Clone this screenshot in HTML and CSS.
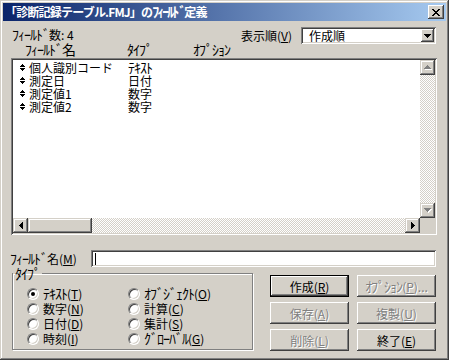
FILE: index.html
```html
<!DOCTYPE html>
<html lang="ja">
<head>
<meta charset="utf-8">
<link rel="stylesheet" href="styles.css">
</head>
<body>
<div class="win">
  <div class="titlebar">
    <span class="title">「診断記録テーブル.FMJ」の<span class="hk">ﾌｨｰﾙﾄﾞ</span>定義</span>
    <div class="close"><svg width="8" height="7" viewBox="0 0 8 7" shape-rendering="crispEdges"><path fill="#000" d="M0 0h2v1h-2zM6 0h2v1h-2zM1 1h2v1h-2zM5 1h2v1h-2zM2 2h4v1h-4zM3 3h2v1h-2zM2 4h4v1h-4zM1 5h2v1h-2zM5 5h2v1h-2zM0 6h2v1h-2zM6 6h2v1h-2z"/></svg></div>
  </div>
  <div class="body">
    <div class="toprow">
      <div class="topleft">
        <div class="count"><span class="hk">ﾌｨｰﾙﾄﾞ</span>数: 4</div>
        <div class="headers"><span class="hk">ﾌｨｰﾙﾄﾞ名</span><span class="hk">ﾀｲﾌﾟ</span><span class="hk">ｵﾌﾟｼｮﾝ</span></div>
      </div>
      <div class="sort">
        <span class="sort-label">表示順(<u>V</u>)</span>
        <div class="combo">
          <span class="combo-text">作成順</span>
          <div class="combo-btn"><svg width="7" height="4" viewBox="0 0 7 4" shape-rendering="crispEdges"><path fill="#000" d="M0 0h7v1h-1v1h-1v1h-1v1h-1v-1h-1v-1h-1v-1h-1z"/></svg></div>
        </div>
      </div>
    </div>
    <div class="listbox">
      <div class="items">
        <div class="item"><svg class="mv" width="5" height="7" viewBox="0 0 5 7" shape-rendering="crispEdges"><path fill="#000" d="M2 0h1v1h1v1h1v1h-5v-1h1v-1h1zM0 4h5v1h-1v1h-1v1h-1v-1h-1v-1h-1z"/></svg><span class="nm">個人識別コード</span><span class="hk">ﾃｷｽﾄ</span></div>
        <div class="item"><svg class="mv" width="5" height="7" viewBox="0 0 5 7" shape-rendering="crispEdges"><path fill="#000" d="M2 0h1v1h1v1h1v1h-5v-1h1v-1h1zM0 4h5v1h-1v1h-1v1h-1v-1h-1v-1h-1z"/></svg><span class="nm">測定日</span><span>日付</span></div>
        <div class="item"><svg class="mv" width="5" height="7" viewBox="0 0 5 7" shape-rendering="crispEdges"><path fill="#000" d="M2 0h1v1h1v1h1v1h-5v-1h1v-1h1zM0 4h5v1h-1v1h-1v1h-1v-1h-1v-1h-1z"/></svg><span class="nm">測定値1</span><span>数字</span></div>
        <div class="item"><svg class="mv" width="5" height="7" viewBox="0 0 5 7" shape-rendering="crispEdges"><path fill="#000" d="M2 0h1v1h1v1h1v1h-5v-1h1v-1h1zM0 4h5v1h-1v1h-1v1h-1v-1h-1v-1h-1z"/></svg><span class="nm">測定値2</span><span>数字</span></div>
      </div>
      <div class="vscroll">
        <div class="sbtn"><svg width="8" height="5" viewBox="0 0 8 5" shape-rendering="crispEdges"><path fill="#fff" d="M4 1h1v1h1v1h1v1h1v1H1V4h1V3h1V2h1z"/><path fill="#808080" d="M3 0h1v1h1v1h1v1h1v1H0V3h1V2h1V1h1z"/></svg></div>
        <div class="track"></div>
        <div class="sbtn"><svg width="8" height="5" viewBox="0 0 8 5" shape-rendering="crispEdges"><path fill="#fff" d="M1 1h7v1h-1v1h-1v1h-1v1h-1v-1h-1v-1h-1v-1h-1z"/><path fill="#808080" d="M0 0h7v1h-1v1h-1v1h-1v1h-1v-1h-1v-1h-1v-1h-1z"/></svg></div>
      </div>
      <div class="hscroll">
        <div class="sbtn"><svg width="4" height="7" viewBox="0 0 4 7" shape-rendering="crispEdges"><path fill="#000" d="M3 0h1v7h-1v-1h-1v-1h-1v-1h-1v-1h1v-1h1v-1h1z"/></svg></div>
        <div class="thumb"></div>
        <div class="track"></div>
        <div class="sbtn"><svg width="4" height="7" viewBox="0 0 4 7" shape-rendering="crispEdges"><path fill="#000" d="M0 0h1v1h1v1h1v1h1v1h-1v1h-1v1h-1v1h-1z"/></svg></div>
      </div>
      <div class="corner"></div>
    </div>
    <div class="namerow">
      <span class="name-label"><span class="hk">ﾌｨｰﾙﾄﾞ</span>名(<u>M</u>)</span>
      <div class="field"><span class="caret"></span></div>
    </div>
    <div class="bottom">
      <fieldset class="group">
        <legend><span class="hk">ﾀｲﾌﾟ</span></legend>
        <div class="radios">
          <div class="opt"><span class="radio checked"></span><span><span class="hk">ﾃｷｽﾄ</span>(<u>T</u>)</span></div>
          <div class="opt"><span class="radio"></span><span><span class="hk">ｵﾌﾞｼﾞｪｸﾄ</span>(<u>O</u>)</span></div>
          <div class="opt"><span class="radio"></span><span>数字(<u>N</u>)</span></div>
          <div class="opt"><span class="radio"></span><span>計算(<u>C</u>)</span></div>
          <div class="opt"><span class="radio"></span><span>日付(<u>D</u>)</span></div>
          <div class="opt"><span class="radio"></span><span>集計(<u>S</u>)</span></div>
          <div class="opt"><span class="radio"></span><span>時刻(<u>I</u>)</span></div>
          <div class="opt"><span class="radio"></span><span><span class="hk">ｸﾞﾛｰﾊﾞﾙ</span>(<u>G</u>)</span></div>
        </div>
      </fieldset>
      <div class="buttons">
        <div class="btn default"><span>作成(<u>R</u>)</span></div>
        <div class="btn disabled"><span><span class="hk">ｵﾌﾟｼｮﾝ</span>(<u>P</u>)...</span></div>
        <div class="btn disabled"><span>保存(<u>A</u>)</span></div>
        <div class="btn disabled"><span>複製(<u>U</u>)</span></div>
        <div class="btn disabled"><span>削除(<u>L</u>)</span></div>
        <div class="btn"><span>終了(<u>E</u>)</span></div>
      </div>
    </div>
  </div>
</div>
</body>
</html>
```

FILE: styles.css
```css
* { box-sizing: border-box; }
html, body { margin: 0; padding: 0; }
body {
  font-family: "Noto Sans CJK JP", "Noto Sans", sans-serif;
  font-size: 12px;
  line-height: 13px;
  color: #000;
  background: #fff;
}
u { text-decoration: underline; text-underline-offset: 1px; }
.hk { font-size: 14px; letter-spacing: -1px; line-height: 13px; }

.win {
  width: 449px;
  height: 360px;
  background: #d4d0c8;
  padding: 3px;
  display: flex;
  flex-direction: column;
  box-shadow: inset -1px -1px #404040, inset 1px 1px #d4d0c8, inset -2px -2px #808080, inset 2px 2px #fff;
}

.titlebar {
  height: 18px;
  flex: none;
  display: flex;
  align-items: center;
  justify-content: space-between;
  background: linear-gradient(to right, #0a246a, #a6caf0);
  color: #fff;
  padding: 0 2px 0 2px;
}
.title { font-weight: bold; line-height: 18px; letter-spacing: -0.8px; }
.title .hk { letter-spacing: -2px; }
.close {
  width: 16px;
  height: 14px;
  display: flex;
  align-items: center;
  justify-content: center;
  background: #d4d0c8;
  box-shadow: inset -1px -1px #404040, inset 1px 1px #fff, inset -2px -2px #808080;
}

.body {
  flex: 1;
  display: flex;
  flex-direction: column;
  padding: 0 9px 0 8px;
}

.toprow {
  display: flex;
  justify-content: space-between;
  align-items: flex-start;
  margin-top: 7px;
}
.count { padding-left: 1px; }
.headers {
  display: grid;
  grid-template-columns: 102px 66px auto;
  padding-left: 14px;
  margin-top: 2px;
}
.sort {
  display: flex;
  align-items: center;
  gap: 9px;
  margin-top: -1px;
  margin-right: 1px;
}
.sort-label { line-height: 17px; }
.combo {
  width: 135px;
  height: 17px;
  background: #fff;
  display: flex;
  align-items: center;
  padding: 2px 2px 2px 8px;
  box-shadow: inset 1px 1px #808080, inset -1px -1px #fff, inset 2px 2px #404040, inset -2px -2px #d4d0c8;
}
.combo-text { flex: 1; line-height: 13px; }
.combo-btn {
  width: 13px;
  height: 13px;
  display: flex;
  align-items: center;
  justify-content: center;
  background: #d4d0c8;
  box-shadow: inset -1px -1px #404040, inset 1px 1px #fff, inset -2px -2px #808080;
}

.listbox {
  margin-top: 2px;
  width: 426px;
  height: 177px;
  padding: 2px;
  background: #fff;
  display: grid;
  grid-template-columns: 1fr 15px;
  grid-template-rows: 1fr 15px;
  box-shadow: inset 1px 1px #808080, inset -1px -1px #fff, inset 2px 2px #404040, inset -2px -2px #d4d0c8;
}
.items { padding-top: 1px; }
.item {
  display: flex;
  align-items: center;
  height: 13px;
  padding-left: 7px;
}
.mv { flex: none; margin-right: 4px; }
.nm { width: 99px; flex: none; }

.vscroll { display: flex; flex-direction: column; }
.hscroll { display: flex; }
.sbtn {
  width: 15px;
  height: 15px;
  flex: none;
  display: flex;
  align-items: center;
  justify-content: center;
  background: #d4d0c8;
  box-shadow: inset -1px -1px #404040, inset 1px 1px #d4d0c8, inset -2px -2px #808080, inset 2px 2px #fff;
}
.track {
  flex: 1;
  background-image: repeating-conic-gradient(#d4d0c8 0 25%, #fff 0 50%);
  background-size: 2px 2px;
}
.thumb {
  width: 64px;
  flex: none;
  background: #d4d0c8;
  box-shadow: inset -1px -1px #404040, inset 1px 1px #d4d0c8, inset -2px -2px #808080, inset 2px 2px #fff;
}
.corner { background: #d4d0c8; }

.namerow {
  display: flex;
  align-items: center;
  margin-top: 15px;
}
.name-label { width: 81px; margin-left: -1px; line-height: 17px; }
.field {
  width: 345px;
  height: 17px;
  background: #fff;
  padding: 2px 4px;
  display: flex;
  align-items: center;
  box-shadow: inset 1px 1px #808080, inset -1px -1px #fff, inset 2px 2px #404040, inset -2px -2px #d4d0c8;
}
.caret { width: 1px; height: 12px; background: #000; }

.bottom { display: flex; align-items: flex-start; }
.group {
  margin: 0 0 0 1px;
  width: 241px;
  height: 83px;
  padding: 0;
  border: 1px solid #808080;
  box-shadow: inset 1px 1px #fff, 1px 1px #fff;
}
.group legend {
  padding: 0 2px;
  margin-left: 0;
  line-height: 12px;
}
.radios {
  display: grid;
  grid-template-columns: 101px auto;
  grid-auto-rows: 15px;
  padding: 6px 0 0 14px;
}
.opt { display: flex; align-items: center; gap: 4px; }
.radio {
  width: 12px;
  height: 12px;
  flex: none;
  border-radius: 50%;
  border: 1px solid;
  border-color: #808080 #fff #fff #808080;
  background: #fff;
  box-shadow: inset 1px 1px 0 #404040, inset -1px -1px 0 #d4d0c8;
  display: flex;
  align-items: center;
  justify-content: center;
}
.radio.checked::after {
  content: "";
  width: 4px;
  height: 4px;
  border-radius: 50%;
  background: #000;
}

.buttons {
  margin: 8px 0 0 17px;
  display: grid;
  grid-template-columns: 79px 79px;
  grid-auto-rows: 22px;
  column-gap: 8px;
  row-gap: 5px;
}
.btn {
  display: flex;
  align-items: center;
  justify-content: center;
  background: #d4d0c8;
  box-shadow: inset -1px -1px #404040, inset 1px 1px #fff, inset -2px -2px #808080;
}
.btn.default {
  border: 1px solid #000;
}
.btn.disabled { color: #808080; text-shadow: 1px 1px 0 #fff; }
.btn.disabled u { text-decoration-color: #808080; }
```
